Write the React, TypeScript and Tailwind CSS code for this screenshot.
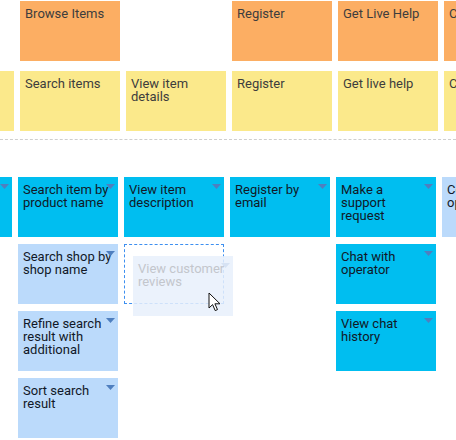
import type { ReactNode } from "react";

type Tone = "orange" | "yellow" | "cyan" | "light";

const toneClass: Record<Tone, string> = {
  orange: "bg-[#fcae63] text-[#3d3d3d]",
  yellow: "bg-[#fbe98b] text-[#3d3d3d]",
  cyan: "bg-[#00bef0] text-[#111827]",
  light: "bg-[#bbdafb] text-[#111827]",
};

function Caret({ faint = false }: { faint?: boolean }) {
  return (
    <svg
      className="absolute right-[3px] top-[7px]"
      width="9"
      height="5"
      viewBox="0 0 9 5"
      aria-hidden
    >
      <path d="M0 0h9L4.5 5z" fill={faint ? "#d6e2f3" : "#4f7fbf"} />
    </svg>
  );
}

function Card({
  tone,
  children,
  caret = false,
}: {
  tone: Tone;
  children?: ReactNode;
  caret?: boolean;
}) {
  return (
    <div
      className={`relative h-[60px] w-[100px] shrink-0 pl-[5px] pr-[6.5px] pt-[6px] text-[13px] leading-[13px] ${toneClass[tone]}`}
    >
      {children}
      {caret && <Caret />}
    </div>
  );
}

function Cursor() {
  return (
    <svg width="13" height="20" viewBox="0 0 13 20" aria-hidden>
      <path
        d="M1 1v15l3.6-3.4 2.6 6 2.3-1-2.6-5.8H12z"
        fill="#fff"
        stroke="#111"
        strokeWidth="1"
        strokeLinejoin="round"
      />
    </svg>
  );
}

export default function App() {
  return (
    <div
      className="h-[440px] w-[456px] overflow-hidden bg-white"
      style={{ fontFamily: "Roboto, 'Liberation Sans', sans-serif" }}
    >
      {/* goals and activities */}
      <div className="ml-[-86px] flex gap-[6px] pt-px">
        <div className="flex w-[100px] shrink-0 flex-col gap-[10px]">
          <div className="h-[60px]" />
          <Card tone="yellow" />
        </div>
        <div className="flex w-[100px] shrink-0 flex-col gap-[10px]">
          <Card tone="orange">Browse Items</Card>
          <Card tone="yellow">Search items</Card>
        </div>
        <div className="flex w-[100px] shrink-0 flex-col gap-[10px]">
          <div className="h-[60px]" />
          <Card tone="yellow">View item details</Card>
        </div>
        <div className="flex w-[100px] shrink-0 flex-col gap-[10px]">
          <Card tone="orange">Register</Card>
          <Card tone="yellow">Register</Card>
        </div>
        <div className="flex w-[100px] shrink-0 flex-col gap-[10px]">
          <Card tone="orange">Get Live Help</Card>
          <Card tone="yellow">Get live help</Card>
        </div>
        <div className="flex w-[100px] shrink-0 flex-col gap-[10px]">
          <Card tone="orange">Checkout</Card>
          <Card tone="yellow">Checkout</Card>
        </div>
      </div>

      <div className="mt-[8px] border-t border-dashed border-[#cfcfcf]" />

      {/* stories */}
      <div className="ml-[-88px] mt-[37px] flex items-start gap-[6px]">
        <div className="flex w-[100px] shrink-0 flex-col gap-[7px]">
          <Card tone="cyan" caret />
        </div>
        <div className="flex w-[100px] shrink-0 flex-col gap-[7px]">
          <Card tone="cyan" caret>
            Search item by product name
          </Card>
          <Card tone="light" caret>
            Search shop by shop name
          </Card>
          <Card tone="light" caret>
            Refine search result with additional
          </Card>
          <Card tone="light" caret>
            Sort search result
          </Card>
        </div>
        <div className="flex w-[100px] shrink-0 flex-col gap-[7px]">
          <Card tone="cyan" caret>
            View item description
          </Card>
          <div className="relative h-[60px] w-[100px] border border-dashed border-[#3d8ff0]">
            <div className="absolute left-[8px] top-[11px] h-[60px] w-[100px] bg-[#e8f0fc]/85 pl-[5px] pr-[3px] pt-[6px] text-[13px] leading-[13px] text-[#c3c6cc]">
              View customer reviews
              <Caret faint />
            </div>
            <div className="absolute left-[83px] top-[47px]">
              <Cursor />
            </div>
          </div>
        </div>
        <div className="flex w-[100px] shrink-0 flex-col gap-[7px]">
          <Card tone="cyan" caret>
            Register by email
          </Card>
        </div>
        <div className="flex w-[100px] shrink-0 flex-col gap-[7px]">
          <Card tone="cyan" caret>
            Make a support request
          </Card>
          <Card tone="cyan" caret>
            Chat with operator
          </Card>
          <Card tone="cyan" caret>
            View chat history
          </Card>
        </div>
        <div className="flex w-[100px] shrink-0 flex-col gap-[7px]">
          <Card tone="light">Contact operator</Card>
        </div>
      </div>
    </div>
  );
}
